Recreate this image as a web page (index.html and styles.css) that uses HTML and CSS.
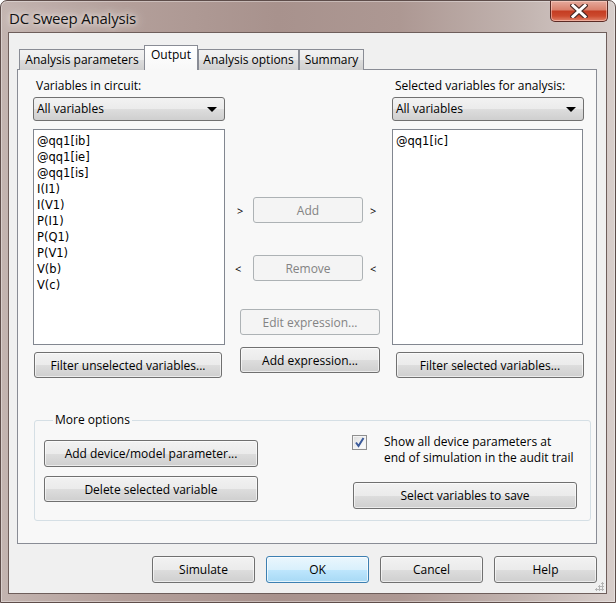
FILE: index.html
```html
<!DOCTYPE html>
<html lang="en">

<head>
    <meta charset="UTF-8">
    <title>DC Sweep Analysis</title>
    <link rel="stylesheet" href="styles.css">
</head>

<body>
    <div class="window">
        <div class="titlebar">
            <span class="title">DC Sweep Analysis</span>
            <div class="close">
                <svg width="18" height="14" viewBox="0 0 18 14">
                    <path d="M3 1.5 L15 12.5 M15 1.5 L3 12.5" stroke="#4a2a26" stroke-width="5.2" stroke-linecap="square" />
                    <path d="M3 1.5 L15 12.5 M15 1.5 L3 12.5" stroke="#ffffff" stroke-width="3" stroke-linecap="square" />
                </svg>
            </div>
        </div>
        <div class="client">
            <div class="tabs">
                <div class="tab tab-ap">Analysis parameters</div>
                <div class="tab tab-active">Output</div>
                <div class="tab tab-ao">Analysis options</div>
                <div class="tab tab-sum">Summary</div>
            </div>
            <div class="panel">
                <div class="vars">
                    <div class="col">
                        <div class="label">Variables in circuit:</div>
                        <div class="combo">All variables<span class="combo-arrow"></span></div>
                        <ul class="listbox">
                            <li>@qq1[ib]</li>
                            <li>@qq1[ie]</li>
                            <li>@qq1[is]</li>
                            <li>I(I1)</li>
                            <li>I(V1)</li>
                            <li>P(I1)</li>
                            <li>P(Q1)</li>
                            <li>P(V1)</li>
                            <li>V(b)</li>
                            <li>V(c)</li>
                        </ul>
                        <button class="btn btn-filter">Filter unselected variables...</button>
                    </div>
                    <div class="col col-mid">
                        <div class="move-row move-add">
                            <span class="arrow">&gt;</span>
                            <button class="btn btn-move" disabled>Add</button>
                            <span class="arrow arrow-right">&gt;</span>
                        </div>
                        <div class="move-row move-remove">
                            <span class="arrow arrow-lt">&lt;</span>
                            <button class="btn btn-move" disabled>Remove</button>
                            <span class="arrow arrow-right">&lt;</span>
                        </div>
                        <button class="btn btn-expr btn-edit" disabled>Edit expression...</button>
                        <button class="btn btn-expr btn-addexpr">Add expression...</button>
                    </div>
                    <div class="col">
                        <div class="label">Selected variables for analysis:</div>
                        <div class="combo">All variables<span class="combo-arrow"></span></div>
                        <ul class="listbox listbox-sel">
                            <li>@qq1[ic]</li>
                        </ul>
                        <button class="btn btn-filter btn-filter-sel">Filter selected variables...</button>
                    </div>
                </div>
                <fieldset class="group">
                    <legend>More options</legend>
                    <div class="group-left">
                        <button class="btn btn-group btn-device">Add device/model parameter...</button>
                        <button class="btn btn-group btn-delete">Delete selected variable</button>
                    </div>
                    <div class="group-right">
                        <label class="check-row">
                            <span class="checkbox">
                                <svg width="11" height="11" viewBox="0 0 11 11">
                                    <path d="M2 5.5 L4.5 9 L9.5 1" fill="none" stroke="#3b5a9a" stroke-width="2" />
                                </svg>
                            </span>
                            <span class="check-text">Show all device parameters at<br>end of simulation in the audit trail</span>
                        </label>
                        <button class="btn btn-save">Select variables to save</button>
                    </div>
                </fieldset>
            </div>
            <div class="footer">
                <button class="btn btn-foot">Simulate</button>
                <button class="btn btn-foot btn-default">OK</button>
                <button class="btn btn-foot">Cancel</button>
                <button class="btn btn-foot">Help</button>
            </div>
            <div class="grip"></div>
        </div>
    </div>
</body>

</html>
```

FILE: styles.css
```css
* {
    margin: 0;
    padding: 0;
    box-sizing: border-box;
}

body {
    font-family: "Open Sans", "Noto Sans", sans-serif;
    font-size: 12px;
    color: #000;
    background: #fff;
}

.window {
    width: 616px;
    height: 603px;
    border: 1px solid #5e4d4a;
    border-radius: 7px 7px 0 0;
    background: linear-gradient(90deg, #c3b4b0 0%, #b39f9a 20%, #a8928d 45%, #ad9893 65%, #c2b4b0 85%, #d8cecb 100%);
    box-shadow: inset 0 0 0 1px rgba(255, 255, 255, 0.35);
    padding: 0 8px 8px 7px;
    display: flex;
    flex-direction: column;
}

.titlebar {
    height: 31px;
    display: flex;
    align-items: flex-start;
    justify-content: space-between;
}

.title {
    font-size: 15px;
    margin-top: 7px;
    margin-left: 1px;
    color: #111;
    letter-spacing: -0.2px;
    text-shadow: 0 0 8px #e8e0de, 0 0 14px #e8e0de, 0 0 4px #ede6e4;
}

.close {
    width: 58px;
    height: 21px;
    margin-right: -1px;
    border: 1px solid #5b2a24;
    border-top: none;
    border-radius: 0 0 5px 5px;
    background: linear-gradient(180deg, #e5aa9c 0%, #d9806c 45%, #c43c22 50%, #cc4a2e 75%, #e0826a 100%);
    box-shadow: inset 0 0 0 1px rgba(255, 220, 210, 0.5);
    display: flex;
    align-items: center;
    justify-content: center;
}

.client {
    flex: 1;
    background: #f0f0f0;
    border: 1px solid #6e5e5b;
    position: relative;
    display: flex;
    flex-direction: column;
}

/* tabs */
.tabs {
    display: flex;
    align-items: flex-end;
    height: 36px;
    margin-left: 10px;
}

.tab {
    height: 21px;
    margin-bottom: -1px;
    border: 1px solid #898c95;
    border-bottom: none;
    background: linear-gradient(180deg, #f2f2f2 0%, #ebebeb 50%, #dddddd 51%, #cfcfcf 100%);
    text-align: center;
    line-height: 19px;
    position: relative;
    z-index: 1;
}

.tab-ap {
    width: 126px;
}

.tab-ao {
    width: 101px;
}

.tab-sum {
    width: 65px;
}

.tab-active {
    width: 54px;
    height: 25px;
    margin-left: -1px;
    margin-right: 0;
    border-color: #898c95;
    background: linear-gradient(180deg, #ffffff 0%, #f8f8f8 100%);
    line-height: 18px;
    z-index: 2;
}

.panel {
    height: 475px;
    margin-left: 8px;
    margin-right: 9px;
    border: 1px solid #898c95;
    background: #f8f8f8;
    padding: 8px 0 0 15px;
}

/* variable lists */
.vars {
    display: grid;
    grid-template-columns: 192px 167px 192px;
}

.label {
    line-height: 16px;
    padding-left: 3px;
}

.combo {
    height: 24px;
    margin-top: 3px;
    border: 1px solid #707070;
    border-radius: 3px;
    background: linear-gradient(180deg, #f2f2f2 0%, #ebebeb 50%, #dddddd 51%, #cfcfcf 100%);
    padding-left: 3px;
    line-height: 22px;
    position: relative;
}

.combo-arrow {
    position: absolute;
    right: 7px;
    top: 9px;
    border-left: 5px solid transparent;
    border-right: 5px solid transparent;
    border-top: 5px solid #000;
}

.listbox {
    list-style: none;
    height: 216px;
    margin-top: 8px;
    border: 1px solid #828790;
    background: #fff;
    padding: 3px 0 0 3px;
    font-family: "DejaVu Sans", sans-serif;
    font-size: 11.5px;
    line-height: 16px;
}

.listbox-sel {
    width: 191px;
}

.btn {
    font-family: inherit;
    font-size: 12px;
    color: #000;
    border: 1px solid #707070;
    border-radius: 3px;
    background: linear-gradient(180deg, #f2f2f2 0%, #ebebeb 50%, #dddddd 51%, #cfcfcf 100%);
    box-shadow: inset 0 0 0 1px rgba(255, 255, 255, 0.6);
}

.btn:disabled {
    color: #838383;
    border-color: #adb2b5;
    background: #f4f4f4;
    box-shadow: none;
}

.btn-filter {
    width: 188px;
    height: 26px;
    margin-top: 7px;
    margin-left: 1px;
}

.btn-filter-sel {
    margin-left: 4px;
}

.col-mid {
    display: flex;
    flex-direction: column;
}

.move-row {
    display: flex;
    align-items: center;
    height: 26px;
}

.move-add {
    margin-top: 119px;
}

.move-remove {
    margin-top: 32px;
}

.arrow {
    width: 28px;
    padding-left: 12px;
    font-size: 11px;
}

.arrow-lt {
    padding-left: 10px;
}

.arrow-right {
    padding-left: 7px;
}

.btn-move {
    width: 110px;
    height: 26px;
}

.btn-expr {
    width: 140px;
    height: 26px;
    margin-left: 15px;
}

.btn-edit {
    margin-top: 28px;
}

.btn-addexpr {
    margin-top: 12px;
}

/* more options */
.group {
    width: 557px;
    margin-top: 34px;
    margin-left: 1px;
    border: 1px solid #d5dfe5;
    border-radius: 3px;
    padding: 6px 13px 11px 9px;
    display: flex;
    justify-content: space-between;
}

.group legend {
    margin-left: 9px;
    padding: 0 2px;
    line-height: 16px;
}

.group-left {
    display: flex;
    flex-direction: column;
    gap: 9px;
    padding-top: 6px;
}

.btn-group {
    width: 214px;
    height: 26px;
}

.btn-device {
    height: 27px;
}

.group-right {
    width: 225px;
    display: flex;
    flex-direction: column;
}

.check-row {
    display: flex;
    align-items: flex-start;
    line-height: 16px;
}

.checkbox {
    width: 15px;
    height: 15px;
    margin-top: 1px;
    margin-right: 17px;
    border: 1px solid #8f8f8f;
    background: linear-gradient(135deg, #dcdcdc 0%, #f4f4f4 60%, #ffffff 100%);
    box-shadow: inset 0 0 0 1px #f4f4f4;
    display: flex;
    align-items: center;
    justify-content: center;
}

.btn-save {
    width: 224px;
    height: 27px;
    margin-top: 16px;
    margin-left: 1px;
}

/* footer */
.footer {
    display: flex;
    justify-content: flex-end;
    gap: 11px;
    margin-top: 12px;
    padding-right: 9px;
}

.btn-foot {
    width: 103px;
    height: 27px;
}

.btn-default {
    border-color: #3c7fb1;
    background: linear-gradient(180deg, #eaf6fd 0%, #d9f0fc 50%, #bee6fd 51%, #a7d9f5 100%);
    box-shadow: inset 0 0 0 1px rgba(255, 255, 255, 0.7);
}

.grip {
    position: absolute;
    right: 1px;
    bottom: 1px;
    width: 10px;
    height: 10px;
    background:
        radial-gradient(circle, #b5b5b5 1px, transparent 1.2px) 6px 0 / 3px 3px no-repeat,
        radial-gradient(circle, #b5b5b5 1px, transparent 1.2px) 3px 3px / 3px 3px no-repeat,
        radial-gradient(circle, #b5b5b5 1px, transparent 1.2px) 6px 3px / 3px 3px no-repeat,
        radial-gradient(circle, #b5b5b5 1px, transparent 1.2px) 0 6px / 3px 3px no-repeat,
        radial-gradient(circle, #b5b5b5 1px, transparent 1.2px) 3px 6px / 3px 3px no-repeat,
        radial-gradient(circle, #b5b5b5 1px, transparent 1.2px) 6px 6px / 3px 3px no-repeat;
}
```
